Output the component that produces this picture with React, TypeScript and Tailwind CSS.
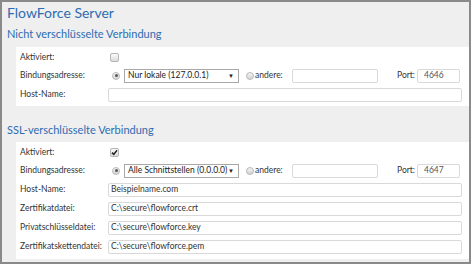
import React from 'react';

const font = { fontFamily: 'Lato, "Open Sans", sans-serif' };

const Checkbox: React.FC<{ checked?: boolean }> = ({ checked }) => (
  <span className="flex h-[9px] w-[9px] items-center justify-center rounded-[2px] border border-[#b5b5b5] bg-gradient-to-b from-[#fafafa] to-[#dcdcdc]">
    {checked && (
      <svg width="7" height="7" viewBox="0 0 7 7">
        <path d="M1 3.6 L2.8 5.4 L6 1.2" fill="none" stroke="#222" strokeWidth="1.5" />
      </svg>
    )}
  </span>
);

const Radio: React.FC<{ checked?: boolean }> = ({ checked }) => (
  <span className="flex h-[8px] w-[8px] items-center justify-center rounded-full border border-[#b8b8b8] bg-gradient-to-b from-[#f4f4f4] to-[#d4d4d4]">
    {checked && <span className="h-[3px] w-[3px] rounded-full bg-[#555]" />}
  </span>
);

const Input: React.FC<{ value?: string; className?: string }> = ({ value, className }) => (
  <div className={`flex h-[14px] shrink-0 items-center whitespace-nowrap rounded-[2px] border border-[#d9d9d9] bg-white pl-[2px] text-[8.5px] text-[#333] ${className ?? ''}`}>
    {value}
  </div>
);

const Row: React.FC<{ label: string; h?: string; children: React.ReactNode }> = ({ label, h = 'h-[19px]', children }) => (
  <div className={`flex ${h} items-center`}>
    <div className="w-[88px] shrink-0 whitespace-nowrap text-[8.5px] text-[#333]">{label}</div>
    {children}
  </div>
);

const Binding: React.FC<{ option: string; port: string }> = ({ option, port }) => (
  <Row label="Bindungsadresse:">
    <div className="ml-[4px]">
      <Radio checked />
    </div>
    <div className="ml-[4px] flex h-[14px] w-[115px] shrink-0 items-center justify-between whitespace-nowrap border border-[#a8a8a8] bg-white pl-[3px] pr-[4px] text-[8.5px] text-[#222]">
      <span>{option}</span>
      <span className="text-[6px]">▼</span>
    </div>
    <div className="ml-[7px]">
      <Radio />
    </div>
    <span className="ml-[1px] w-[37px] shrink-0 text-[8.5px] text-[#333]">andere:</span>
    <Input className="w-[86px]" />
    <span className="ml-[19px] mr-[2px] shrink-0 whitespace-nowrap text-[8.5px] text-[#333]">Port:</span>
    <Input className="w-[43px] pl-[6px] text-[#555]" value={port} />
  </Row>
);

export default function App() {
  return (
    <div className="h-[267px] w-[473px] bg-white" style={font}>
      <div className="flex h-[264px] w-[471px] flex-col border-2 border-[#8a8a8a] bg-[#efeff0]">
        <h1 className="h-[22px] pl-[5px] text-[14px] leading-[22px] text-[#2d6cb0]">FlowForce Server</h1>
        <h2 className="mb-[3px] h-[20px] pl-[5px] text-[11px] leading-[20px] text-[#2d6cb0]">Nicht verschlüsselte Verbindung</h2>
        <div className="ml-[14px] bg-white pb-[2px] pl-[4px] pt-[2px]">
          <Row label="Aktiviert:" h="h-[17px]">
            <div className="ml-[2px]">
              <Checkbox />
            </div>
          </Row>
          <Binding option="Nur lokale (127.0.0.1)" port="4646" />
          <Row label="Host-Name:">
            <Input className="w-[354px]" />
          </Row>
        </div>
        <h2 className="mb-[2px] mt-[14px] h-[20px] pl-[5px] text-[11px] leading-[20px] text-[#2d6cb0]">SSL-verschlüsselte Verbindung</h2>
        <div className="ml-[14px] bg-white pb-[3px] pl-[4px] pt-[2px]">
          <Row label="Aktiviert:" h="h-[17px]">
            <div className="ml-[2px]">
              <Checkbox checked />
            </div>
          </Row>
          <Binding option="Alle Schnittstellen (0.0.0.0)" port="4647" />
          <Row label="Host-Name:">
            <Input className="w-[354px]" value="Beispielname.com" />
          </Row>
          <Row label="Zertifikatdatei:">
            <Input className="w-[354px]" value="C:\secure\flowforce.crt" />
          </Row>
          <Row label="Privatschlüsseldatei:">
            <Input className="w-[354px]" value="C:\secure\flowforce.key" />
          </Row>
          <Row label="Zertifikatskettendatei:">
            <Input className="w-[354px]" value="C:\secure\flowforce.pem" />
          </Row>
        </div>
      </div>
    </div>
  );
}
